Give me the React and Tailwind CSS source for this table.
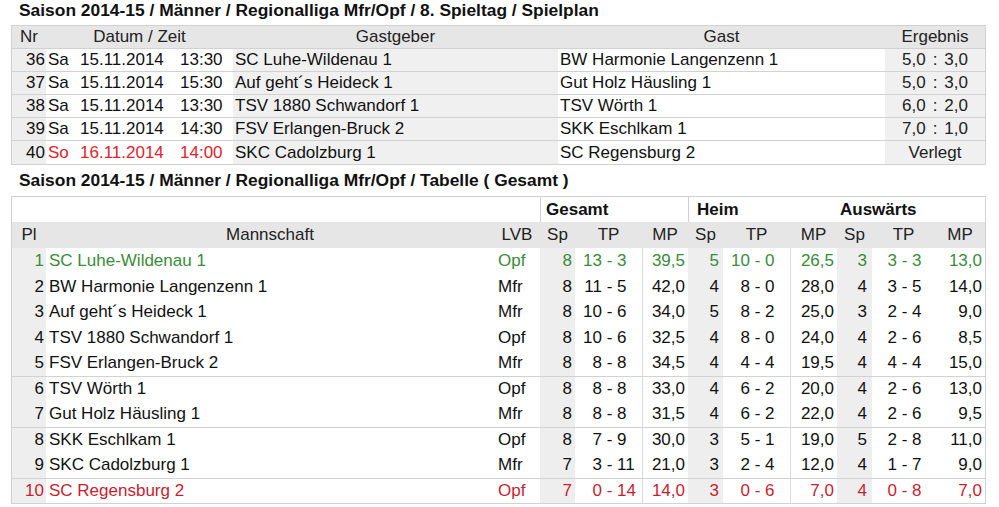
import React from 'react';

const spielplan = [
  { nr: 36, tag: 'Sa', datum: '15.11.2014', zeit: '13:30', heim: 'SC Luhe-Wildenau 1', gast: 'BW Harmonie Langenzenn 1', erg: ['5,0', '3,0'] },
  { nr: 37, tag: 'Sa', datum: '15.11.2014', zeit: '15:30', heim: 'Auf geht´s Heideck 1', gast: 'Gut Holz Häusling 1', erg: ['5,0', '3,0'] },
  { nr: 38, tag: 'Sa', datum: '15.11.2014', zeit: '13:30', heim: 'TSV 1880 Schwandorf 1', gast: 'TSV Wörth 1', erg: ['6,0', '2,0'] },
  { nr: 39, tag: 'Sa', datum: '15.11.2014', zeit: '14:30', heim: 'FSV Erlangen-Bruck 2', gast: 'SKK Eschlkam 1', erg: ['7,0', '1,0'] },
  { nr: 40, tag: 'So', datum: '16.11.2014', zeit: '14:00', heim: 'SKC Cadolzburg 1', gast: 'SC Regensburg 2', erg: null, red: true },
];

const tabelle = [
  { pl: 1, team: 'SC Luhe-Wildenau 1', lvb: 'Opf', g: [8, 13, 3, '39,5'], h: [5, 10, 0, '26,5'], a: [3, 3, 3, '13,0'], tone: 'text-[#3a8c3a]' },
  { pl: 2, team: 'BW Harmonie Langenzenn 1', lvb: 'Mfr', g: [8, 11, 5, '42,0'], h: [4, 8, 0, '28,0'], a: [4, 3, 5, '14,0'] },
  { pl: 3, team: 'Auf geht´s Heideck 1', lvb: 'Mfr', g: [8, 10, 6, '34,0'], h: [5, 8, 2, '25,0'], a: [3, 2, 4, '9,0'] },
  { pl: 4, team: 'TSV 1880 Schwandorf 1', lvb: 'Opf', g: [8, 10, 6, '32,5'], h: [4, 8, 0, '24,0'], a: [4, 2, 6, '8,5'] },
  { pl: 5, team: 'FSV Erlangen-Bruck 2', lvb: 'Mfr', g: [8, 8, 8, '34,5'], h: [4, 4, 4, '19,5'], a: [4, 4, 4, '15,0'] },
  { pl: 6, team: 'TSV Wörth 1', lvb: 'Opf', g: [8, 8, 8, '33,0'], h: [4, 6, 2, '20,0'], a: [4, 2, 6, '13,0'], sep: true },
  { pl: 7, team: 'Gut Holz Häusling 1', lvb: 'Mfr', g: [8, 8, 8, '31,5'], h: [4, 6, 2, '22,0'], a: [4, 2, 6, '9,5'] },
  { pl: 8, team: 'SKK Eschlkam 1', lvb: 'Opf', g: [8, 7, 9, '30,0'], h: [3, 5, 1, '19,0'], a: [5, 2, 8, '11,0'], sep: true },
  { pl: 9, team: 'SKC Cadolzburg 1', lvb: 'Mfr', g: [7, 3, 11, '21,0'], h: [3, 2, 4, '12,0'], a: [4, 1, 7, '9,0'] },
  { pl: 10, team: 'SC Regensburg 2', lvb: 'Opf', g: [7, 0, 14, '14,0'], h: [3, 0, 6, '7,0'], a: [4, 0, 8, '7,0'], tone: 'text-[#c81e32]', sep: true },
];

// "13 - 3" with the dash lined up
const TP = ({ a, b }) => (
  <span className="flex whitespace-pre">
    <span className="w-[19px] text-right">{a}</span>
    <span>{' - '}{b}</span>
  </span>
);

const App = () => {
  return (
    <div className="w-[999px] h-[507px] bg-white text-[#111] font-['Liberation_Sans',Arial,sans-serif] text-[17px] overflow-hidden">
      {/* Spielplan */}
      <div className="h-[25px] pl-[19px] font-bold text-[17.4px] leading-[20px]">
        Saison 2014-15 / Männer / Regionalliga Mfr/Opf / 8. Spieltag / Spielplan
      </div>
      <div className="ml-[11px] w-[975px] border border-[#d2d2d2]">
        <div className="flex h-[23px] items-center bg-[#e6e6e6] border-b border-[#d2d2d2] text-[#222]">
          <div className="w-[34px] text-center">Nr</div>
          <div className="w-[187px] text-center">Datum / Zeit</div>
          <div className="w-[325px] text-center">Gastgeber</div>
          <div className="w-[327px] text-center">Gast</div>
          <div className="w-[100px] text-center">Ergebnis</div>
        </div>
        {spielplan.map((s, i) => (
          <div key={s.nr} className={`flex h-[23px] ${i < spielplan.length - 1 ? 'border-b border-[#d2d2d2]' : ''}`}>
            <div className="w-[34px] flex items-center justify-end pr-[1px] bg-[#eeeeee]">{s.nr}</div>
            <div className={`w-[187px] flex items-center bg-white ${s.red ? 'text-[#e3222d]' : ''}`}>
              <span className="w-[34px] pl-[2px]">{s.tag}</span>
              <span className="w-[100px]">{s.datum}</span>
              <span>{s.zeit}</span>
            </div>
            <div className="w-[325px] flex items-center pl-[2px] bg-[#f0f0f0]">{s.heim}</div>
            <div className="w-[327px] flex items-center pl-[2px] bg-white">{s.gast}</div>
            <div className="w-[100px] flex items-center justify-center bg-[#f0f0f0] text-[#222]">
              {s.erg ? (
                <>
                  <span>{s.erg[0]}</span>
                  <span className="ml-[7px]">:</span>
                  <span className="ml-[7px]">{s.erg[1]}</span>
                </>
              ) : (
                'Verlegt'
              )}
            </div>
          </div>
        ))}
      </div>

      {/* Tabelle */}
      <div className="h-[31px] pt-[5px] pl-[19px] font-bold text-[17.4px] leading-[20px]">
        Saison 2014-15 / Männer / Regionalliga Mfr/Opf / Tabelle ( Gesamt )
      </div>
      <div className="ml-[11px] w-[975px] border border-[#d2d2d2]">
        <div className="flex h-[25px] font-bold">
          <div className="w-[528px]" />
          <div className="w-[148px] flex items-center pl-[5px] border-l border-[#d2d2d2]">Gesamt</div>
          <div className="w-[149px] flex items-center pl-[8px] border-l border-[#d2d2d2]">Heim</div>
          <div className="w-[148px] flex items-center pl-[3px]">Auswärts</div>
        </div>
        <div className="flex h-[26px] items-center bg-[#e6e6e6] text-[#222]">
          <div className="w-[34px] text-center">Pl</div>
          <div className="w-[448px] text-center">Mannschaft</div>
          <div className="w-[46px] text-center">LVB</div>
          <div className="w-[35px] text-center">Sp</div>
          <div className="w-[67px] text-center">TP</div>
          <div className="w-[46px] text-center">MP</div>
          <div className="w-[35px] text-center">Sp</div>
          <div className="w-[67px] text-center">TP</div>
          <div className="w-[47px] text-center">MP</div>
          <div className="w-[35px] text-center">Sp</div>
          <div className="w-[63px] text-center">TP</div>
          <div className="w-[50px] text-center">MP</div>
        </div>
        {tabelle.map((t) => (
          <div key={t.pl} className={`flex h-[25.5px] ${t.sep ? 'border-t border-[#d2d2d2]' : ''} ${t.tone || ''}`}>
            <div className="w-[34px] flex items-center justify-end pr-[2px] bg-[#eeeeee]">{t.pl}</div>
            <div className="w-[448px] flex items-center pl-[3px]">{t.team}</div>
            <div className="w-[46px] flex items-center pl-[4px]">{t.lvb}</div>
            <div className="w-[35px] flex items-center justify-end pr-[3px] bg-[#eeeeee]">{t.g[0]}</div>
            <div className="w-[67px] flex items-center pl-[8px]"><TP a={t.g[1]} b={t.g[2]} /></div>
            <div className="w-[46px] flex items-center justify-end pr-[3px] border-l border-[#dcdcdc]">{t.g[3]}</div>
            <div className="w-[35px] flex items-center justify-end pr-[4px] bg-[#eeeeee]">{t.h[0]}</div>
            <div className="w-[67px] flex items-center pl-[8px]"><TP a={t.h[1]} b={t.h[2]} /></div>
            <div className="w-[47px] flex items-center justify-end pr-[3px] border-l border-[#dcdcdc]">{t.h[3]}</div>
            <div className="w-[35px] flex items-center justify-end pr-[5px] bg-[#eeeeee]">{t.a[0]}</div>
            <div className="w-[63px] flex items-center pl-[6px]"><TP a={t.a[1]} b={t.a[2]} /></div>
            <div className="w-[50px] flex items-center justify-end pr-[3px]">{t.a[3]}</div>
          </div>
        ))}
      </div>
    </div>
  );
};

export default App;
